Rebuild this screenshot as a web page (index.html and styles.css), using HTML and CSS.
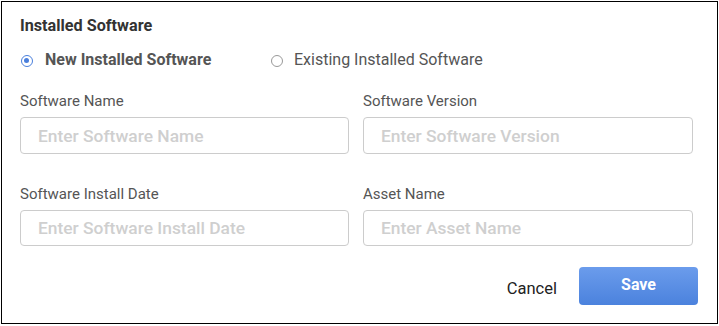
FILE: index.html
```html
<!DOCTYPE html>
<html lang="en">
<head>
<meta charset="utf-8">
<title>Installed Software</title>
<link rel="stylesheet" href="styles.css">
</head>
<body>
<div class="frame">
  <h2 class="title">Installed Software</h2>
  <div class="radios">
    <label class="radio selected"><span class="dot"></span>New Installed Software</label>
    <label class="radio"><span class="dot"></span>Existing Installed Software</label>
  </div>
  <div class="grid">
    <div class="field">
      <div class="label">Software Name</div>
      <div class="input">Enter Software Name</div>
    </div>
    <div class="field">
      <div class="label">Software Version</div>
      <div class="input">Enter Software Version</div>
    </div>
    <div class="field">
      <div class="label">Software Install Date</div>
      <div class="input short">Enter Software Install Date</div>
    </div>
    <div class="field">
      <div class="label">Asset Name</div>
      <div class="input short">Enter Asset Name</div>
    </div>
  </div>
  <div class="actions">
    <button class="cancel">Cancel</button>
    <button class="save">Save</button>
  </div>
</div>
</body>
</html>
```
FILE: styles.css
```css
html, body { margin: 0; padding: 0; background: #fff; }
body { padding: 1px; font-family: Roboto, "Liberation Sans", sans-serif; }
.frame {
  width: 717px;
  height: 323px;
  box-sizing: border-box;
  border: 1px solid #000;
  padding: 14px 19px 0 18px;
  display: flex;
  flex-direction: column;
}
.title {
  margin: 0;
  font-size: 16.2px;
  line-height: 20px;
  font-weight: 700;
  color: #333;
}
.radios {
  margin-top: 14px;
  display: flex;
  height: 20px;
  align-items: center;
}
.radio {
  display: flex;
  align-items: center;
  font-size: 16px;
  line-height: 20px;
  color: #555;
}
.radio.selected { font-weight: 700; width: 250px; }
.dot {
  width: 12px;
  height: 12px;
  box-sizing: border-box;
  border: 1px solid #999;
  border-radius: 50%;
  margin: 1px 11px 0 1px;
  position: relative;
}
.selected .dot { border-color: #4a7fdc; border-width: 1.5px; margin-right: 12px; }
.selected .dot::after {
  content: "";
  position: absolute;
  left: 2px; top: 2px;
  width: 5px; height: 5px;
  border-radius: 50%;
  background: #4a7fdc;
}
.grid {
  width: 673px;
  margin-top: 22px;
  display: grid;
  grid-template-columns: 329px 330px;
  column-gap: 14px;
  row-gap: 31px;
}
.field { display: flex; flex-direction: column; }
.label {
  font-size: 15px;
  line-height: 19px;
  color: #555;
  margin-bottom: 6px;
}
.input {
  height: 37px;
  box-sizing: border-box;
  border: 1px solid #ccc;
  border-radius: 4px;
  padding: 0 17px;
  display: flex;
  align-items: center;
  font-size: 17.4px;
  font-weight: 500;
  color: #cfcfcf;
}
.input.short { height: 36px; }
.actions {
  margin-top: 21px;
  display: flex;
  justify-content: flex-end;
  align-items: center;
  gap: 22px;
}
.cancel {
  border: 0;
  background: none;
  padding: 0;
  font-family: inherit;
  font-size: 16.5px;
  color: #222;
  margin-top: 4px;
}
.save {
  width: 119px;
  height: 38px;
  border: 0;
  border-radius: 4px;
  background: linear-gradient(#6b9cec, #4b82dd);
  color: #fff;
  font-family: inherit;
  font-size: 16px;
  font-weight: 700;
  padding: 0 0 4px;
}
```
